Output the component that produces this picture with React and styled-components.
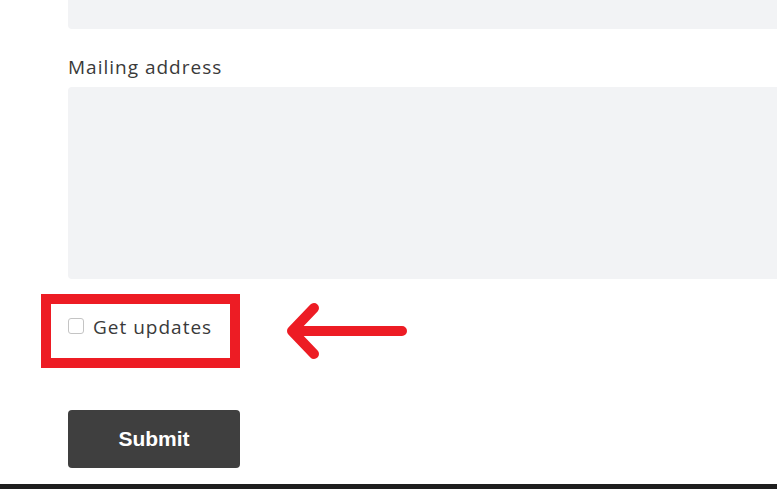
import React from 'react'
import styled, { createGlobalStyle } from 'styled-components'

const GlobalStyle = createGlobalStyle`
    html, body {
        margin: 0;
        padding: 0;
        background: #ffffff;
        overflow: hidden;
    }
    body {
        font-family: "Open Sans", "Liberation Sans", Arial, sans-serif;
    }
`

const App = () => {
    return (<>
    <GlobalStyle/>
    <Page>
        <Form onSubmit={e => e.preventDefault()}>
            <TopField type="text" aria-label="Previous field"/>
            <Label htmlFor="mailing">Mailing address</Label>
            <TextArea id="mailing"/>
            <Row>
                <Highlight>
                    <CheckLabel>
                        <Check type="checkbox"/>
                        Get updates
                    </CheckLabel>
                </Highlight>
                <Arrow width="130" height="62" viewBox="0 0 130 62">
                    <path d="M118 30 L8 30 M30 7 L8 30 L30 53" />
                </Arrow>
            </Row>
            <SubmitButton type="submit">Submit</SubmitButton>
        </Form>
        <BottomBar/>
    </Page>
    </>)
}
export default App

const Page = styled.div`
    width: 777px;
    height: 489px;
    display: flex;
    flex-direction: column;
    overflow: hidden;
`
const Form = styled.form`
    display: flex;
    flex-direction: column;
    align-items: flex-start;
    padding-left: 68px;
    flex: 1;
`
const fieldStyle = `
    box-sizing: border-box;
    width: calc(100% + 20px);
    margin-right: -20px;
    background: #f2f3f5;
    border: none;
    border-radius: 4px;
    outline: none;
    font-family: inherit;
`
const TopField = styled.input`
    ${fieldStyle}
    height: 48px;
    margin-top: -19px;
`
const Label = styled.label`
    margin-top: 27px;
    font-size: 19px;
    line-height: 1.2;
    letter-spacing: 1px;
    color: #3a3a3a;
`
const TextArea = styled.textarea`
    ${fieldStyle}
    height: 192px;
    margin-top: 8px;
    resize: none;
`
const Row = styled.div`
    display: flex;
    align-items: center;
    gap: 44px;
    margin-top: 15px;
    margin-left: -27px;
`
const Highlight = styled.div`
    box-sizing: border-box;
    width: 199px;
    height: 74px;
    border: 10px solid #ed1c24;
    display: flex;
    align-items: flex-start;
    padding: 12px 0 0 17px;
`
const CheckLabel = styled.label`
    display: flex;
    align-items: flex-start;
    gap: 9px;
    font-size: 19px;
    line-height: 1.2;
    letter-spacing: 1px;
    color: #3a3a3a;
`
const Check = styled.input`
    appearance: none;
    box-sizing: border-box;
    width: 16px;
    height: 16px;
    margin: 2px 0 0 0;
    border: 1px solid #c4c4c4;
    border-radius: 3px;
    background: #ffffff;
`
const Arrow = styled.svg`
    fill: none;
    stroke: #ed1c24;
    stroke-width: 10;
    stroke-linecap: round;
    stroke-linejoin: round;
    margin-top: 2px;
`
const SubmitButton = styled.button`
    margin-top: 42px;
    width: 172px;
    height: 58px;
    background: #3f3f3f;
    color: #ffffff;
    border: none;
    border-radius: 4px;
    font-family: "Liberation Sans", Arial, sans-serif;
    font-weight: bold;
    font-size: 21px;
`
const BottomBar = styled.div`
    height: 5px;
    background: #1e1e1e;
`
